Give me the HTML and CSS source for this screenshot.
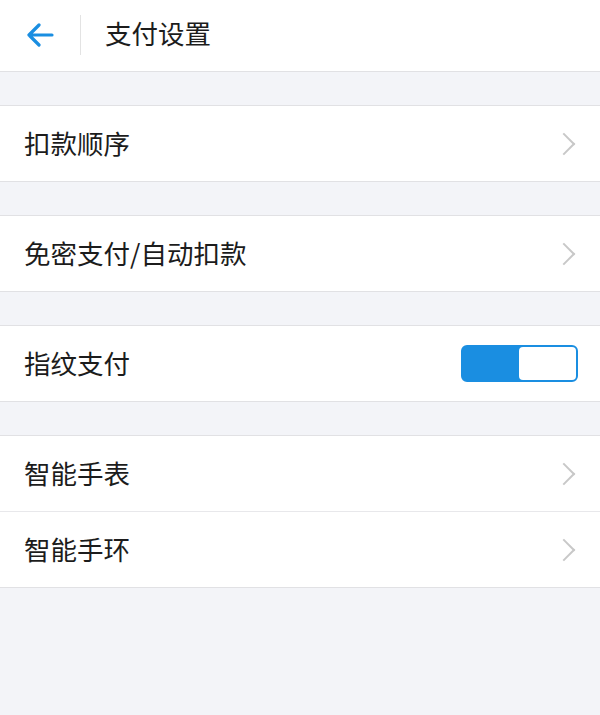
FILE: index.html
```html
<!DOCTYPE html>
<html lang="zh-CN">
<head>
  <meta charset="UTF-8">
  <meta name="viewport" content="width=device-width, initial-scale=1.0">
  <title>支付设置</title>
  <link rel="stylesheet" href="styles.css">
</head>
<body>
  <div class="header">
    <span class="back">
      <svg width="28" height="24" viewBox="0 0 28 24"><path d="M26 12H3M13 2L3 12l10 10" fill="none" stroke="#1a8ee1" stroke-width="3.2" stroke-linecap="round" stroke-linejoin="round"/></svg>
    </span>
    <span class="sep"></span>
    <h1>支付设置</h1>
  </div>

  <div class="group">
    <div class="row"><span>扣款顺序</span><i class="chev"></i></div>
  </div>

  <div class="group">
    <div class="row"><span>免密支付/自动扣款</span><i class="chev"></i></div>
  </div>

  <div class="group">
    <div class="row"><span>指纹支付</span><span class="switch"><b></b></span></div>
  </div>

  <div class="group">
    <div class="row"><span>智能手表</span><i class="chev"></i></div>
    <div class="row"><span>智能手环</span><i class="chev"></i></div>
  </div>
</body>
</html>
```

FILE: styles.css
```css
body {
  margin: 0;
  background-color: #f3f4f8;
  font-family: "Noto Sans CJK SC", "Noto Sans", sans-serif;
  color: #1c1c1c;
}

.header {
  height: 71px;
  background-color: white;
  border-bottom: 1px solid #e1e1e4;
  display: flex;
  align-items: center;
}

.back {
  width: 80px;
  display: flex;
  justify-content: center;
  padding-right: 2px;
  box-sizing: border-box;
}

.back svg {
  display: block;
  margin-left: 2px;
  margin-bottom: 2px;
}

.sep {
  width: 1px;
  height: 40px;
  background-color: #e3e3e3;
  margin-bottom: 2px;
}

h1 {
  margin: 0 0 6px 24px;
  font-size: 26.5px;
  font-weight: normal;
  color: #1c1c1c;
}

.group {
  margin-top: 33px;
  background-color: white;
  border-top: 1px solid #e1e1e4;
  border-bottom: 1px solid #e1e1e4;
}

.row {
  height: 75px;
  padding: 0 22px 0 24px;
  display: flex;
  align-items: center;
  justify-content: space-between;
  font-size: 26.5px;
}

.row span:first-child {
  margin-bottom: 2px;
}

.row + .row {
  border-top: 1px solid #e8e8eb;
}

.chev {
  width: 14px;
  height: 14px;
  border-top: 2px solid #c8c8c8;
  border-right: 2px solid #c8c8c8;
  transform: rotate(45deg);
  margin-right: 6px;
}

.switch {
  width: 117px;
  height: 37px;
  box-sizing: border-box;
  background-color: #1a8ee1;
  border: 2px solid #1a8ee1;
  border-radius: 6px;
  display: flex;
  justify-content: flex-end;
}

.switch b {
  width: 57px;
  background-color: white;
  border-radius: 4px;
}
```
